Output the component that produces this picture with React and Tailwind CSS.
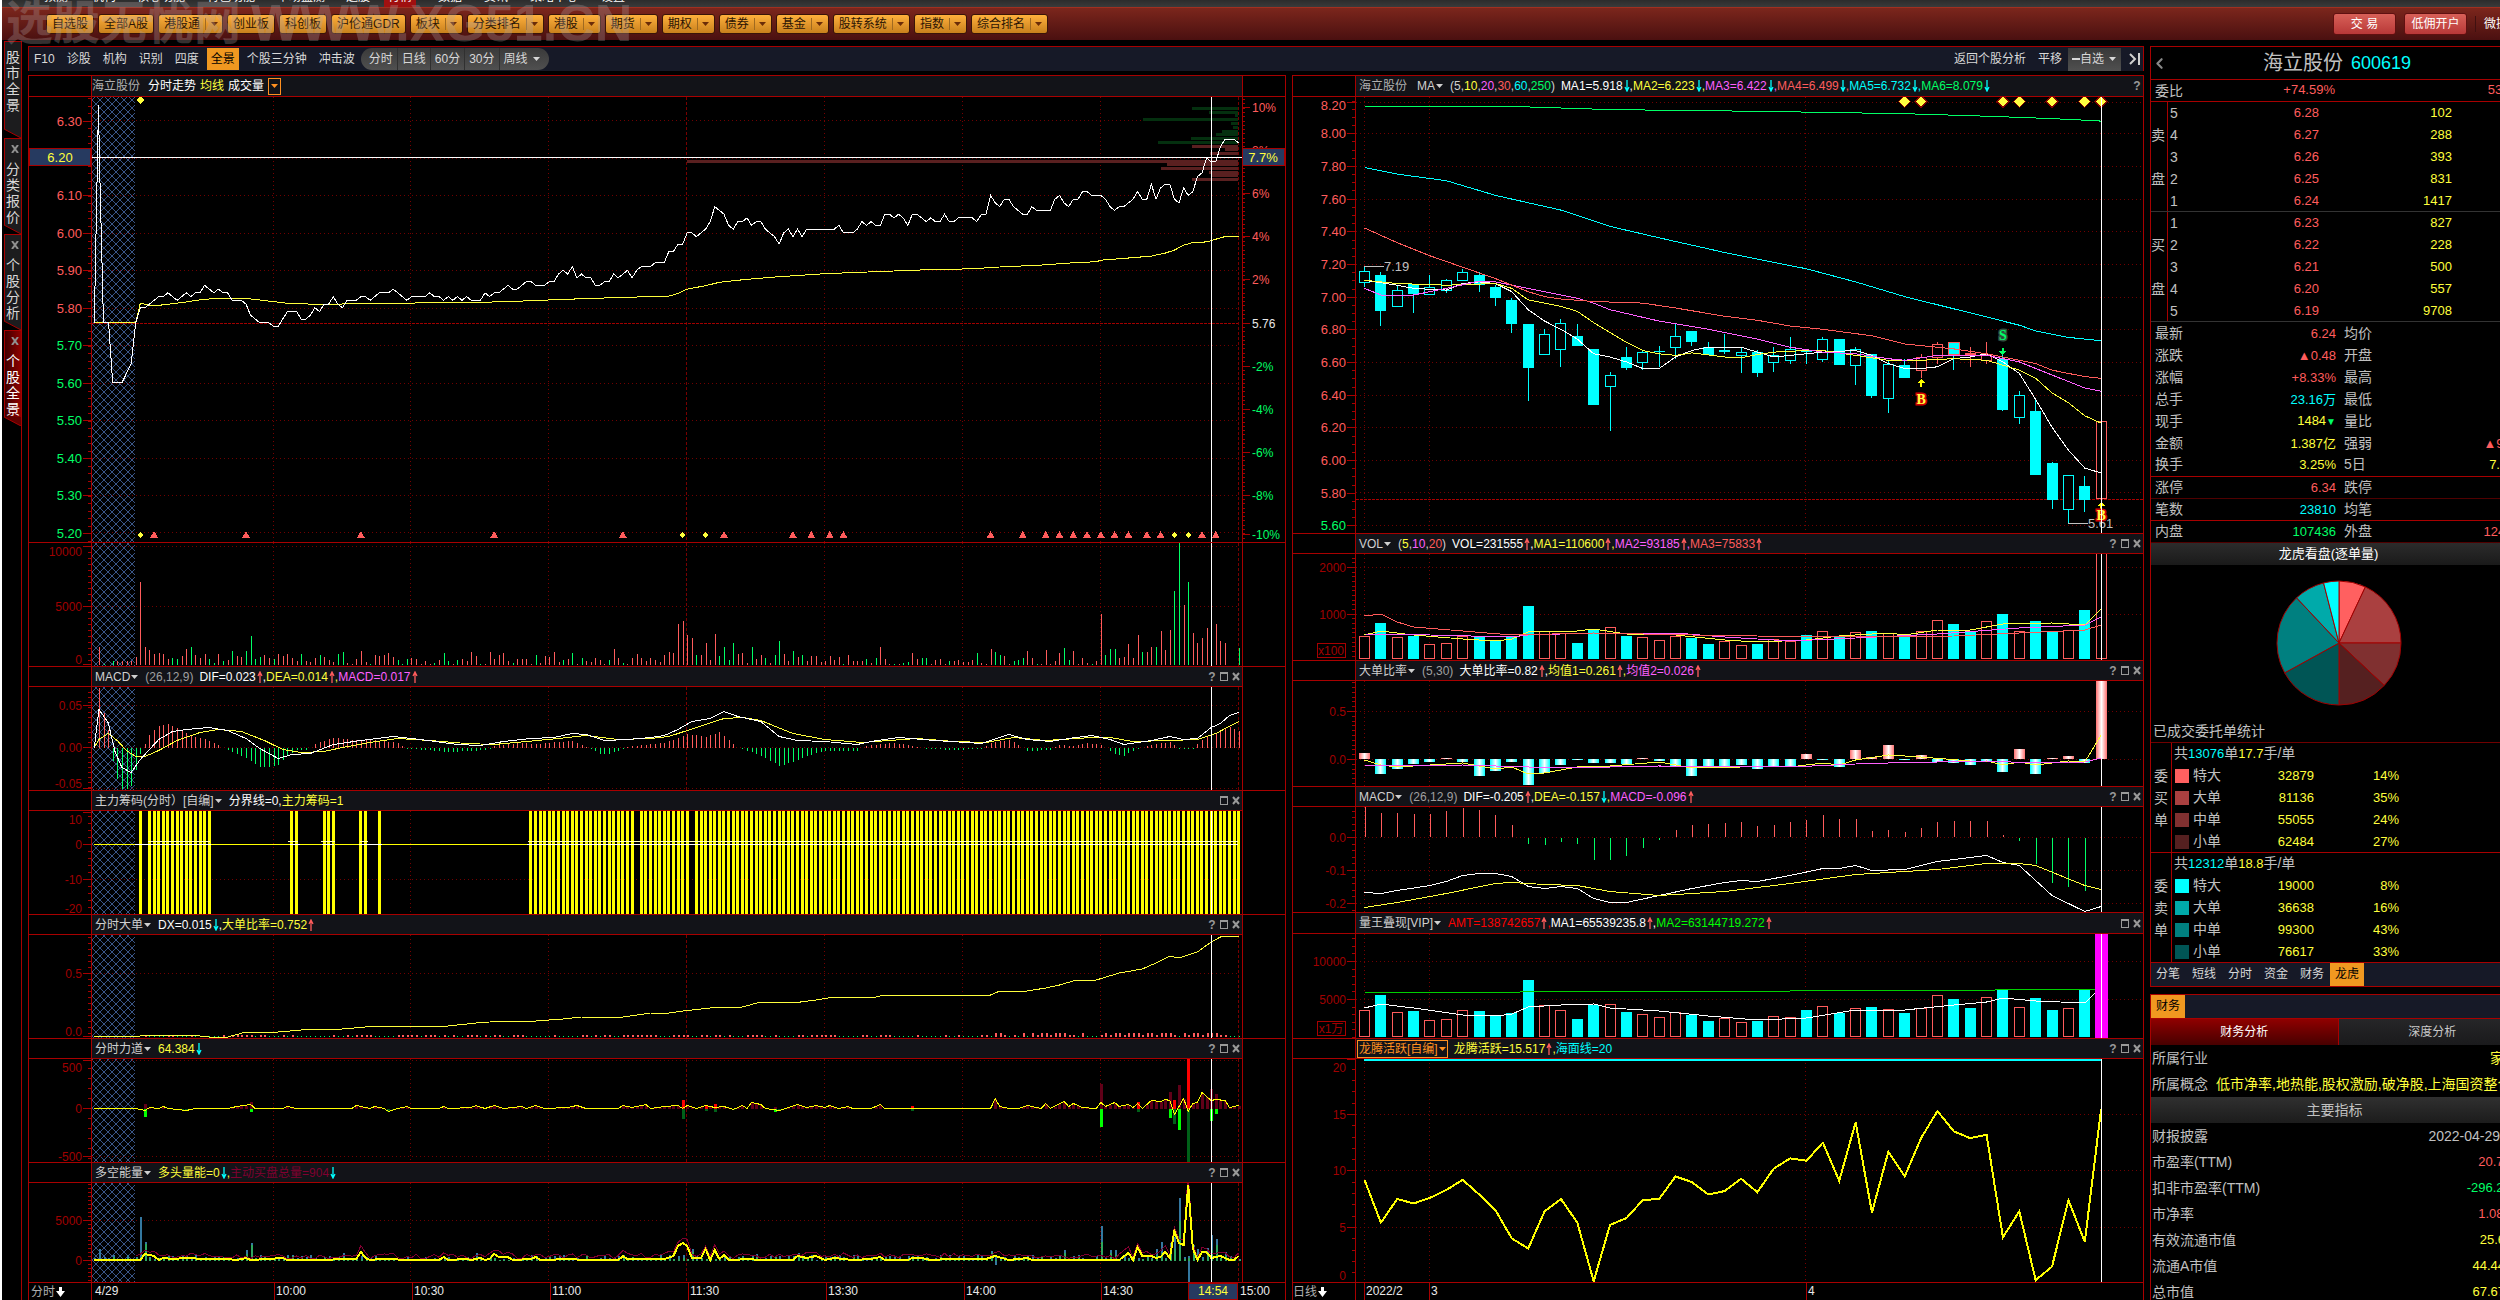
import { ChevronLeft } from "lucide-react";

const RED = "#ff5c5c";
const GREEN = "#00ff66";
const YELLOW = "#ffff3c";
const CYAN = "#00ffff";
const MAGENTA = "#ff60ff";
const LINE = "#a80000";

// minute -> x on the intraday canvas, day index -> x on the daily canvas
const mx = (m) => 135.7 + m * 4.596;
const dx = (i) => 1364.5 + i * 16.37;
const priceY = (p) => 120.5 + (6.3 - p) * 374.6;
const dayY = (p) => 133.3 + (8 - p) * 163.3;

const toPoints = (data, fx, fy) => data.map(([a, b]) => `${fx(a).toFixed(1)},${fy(b).toFixed(1)}`).join(" ");

const interpolate = (data, m) => {
  for (let i = 1; i < data.length; i++) {
    const [a, va] = data[i - 1];
    const [b, vb] = data[i];
    if (m <= b) return va + ((vb - va) * (m - a)) / (b - a);
  }
  return data[data.length - 1][1];
};

const noise = (n) => {
  const v = Math.sin(n * 12.9898) * 43758.5453;
  return v - Math.floor(v);
};

// one price (in cents) per minute, starting at minute 1
const PRICES = [
  580, 580, 581, 582, 583, 583, 584, 583, 582, 583, 584, 583, 584, 584, 586, 585, 584, 585, 584, 584,
  582, 582, 582, 581, 578, 577, 576, 576, 576, 575, 575, 577, 579, 579, 579, 577, 577, 578, 580, 579,
  581, 581, 583, 581, 580, 582, 582, 582, 583, 583, 582, 583, 584, 584, 584, 585, 584, 583, 582, 583,
  583, 583, 583, 584, 583, 583, 582, 583, 582, 583, 582, 583, 582, 582, 582, 584, 583, 584, 584, 585,
  586, 585, 585, 586, 587, 587, 586, 586, 586, 587, 587, 589, 590, 589, 591, 588, 589, 588, 588, 586,
  586, 587, 587, 589, 588, 589, 590, 588, 590, 591, 591, 591, 592, 592, 592, 595, 595, 597, 597, 600,
  600, 599, 600, 601, 603, 607, 606, 605, 602, 601, 603, 603, 604, 602, 603, 603, 601, 600, 599, 597,
  600, 601, 599, 601, 599, 601, 601, 601, 601, 601, 601, 601, 602, 600, 600, 600, 601, 603, 602, 603,
  602, 602, 605, 605, 604, 605, 604, 602, 605, 605, 604, 603, 604, 603, 603, 605, 603, 603, 604, 604,
  604, 604, 603, 605, 605, 610, 608, 607, 609, 609, 607, 606, 605, 605, 607, 606, 606, 606, 606, 609,
  610, 608, 607, 609, 609, 611, 611, 610, 610, 610, 609, 607, 606, 607, 607, 608, 609, 611, 609, 609,
  613, 609, 612, 613, 613, 609, 608, 612, 610, 611, 615, 616, 620, 619, 619, 623, 625, 625, 625, 624,
];

const PRE_OPEN = [
  [-9, 5.76], [-8.1, 6.34], [-7.9, 6.2], [-7, 5.76], [-5.9, 5.76], [-5, 5.6], [-3, 5.6], [-2.2, 5.62], [-1, 5.65], [0, 5.76],
];

const AVERAGE = [
  [-9, 5.76], [0, 5.76], [1, 5.812], [4, 5.805], [10, 5.814], [15, 5.823], [21, 5.826], [24, 5.825], [29, 5.818], [33, 5.812],
  [40, 5.809], [54, 5.812], [70, 5.814], [80, 5.816], [88, 5.82], [99, 5.825], [112, 5.83], [115.5, 5.83], [118, 5.838],
  [120, 5.85], [124, 5.859], [127, 5.868], [133, 5.876], [140, 5.883], [150, 5.891], [162, 5.897], [173, 5.902], [182, 5.904],
  [188, 5.909], [197, 5.914], [204, 5.92], [209, 5.923], [210, 5.927], [215, 5.932], [221, 5.938], [224, 5.946], [226, 5.954],
  [228, 5.967], [230, 5.974], [233, 5.976], [235, 5.983], [237, 5.99], [240, 5.99],
];

// bar heights per minute from 9:30, negative is a falling minute
const VOLUMES = [
  8, 83, 18, 15, 11, 12, 11, 6, -7, -6, 9, 16, -18, 10, 7, 11, -6, -2, 11, -4, 5, -14, 9, 8, -14, -29, -6, -8, 10, 7,
  -6, 11, 9, 11, 7, 4, -11, 4, 3, 7, -10, 8, 5, 3, -11, -13, 2, 1, 6, 14, 3, -1, 10, 9, 10, 12, 8, -5, -1, -6,
  7, 6, 1, 4, 1, -2, 5, -12, -4, 1, -5, 6, 4, 13, 9, -1, 1, 13, 6, 10, 12, 4, -2, 6, 6, 6, 1, -10, 2, 9,
  8, 13, 3, -5, 6, -12, 1, -7, 4, 3, 7, 5, 1, -5, 16, 7, -2, 1, 7, 11, 7, 4, 7, 5, 3, 10, 13, 12, 41, 44,
  30, 27, -10, 10, 22, 5, 31, -9, -18, -5, -22, 11, 12, 2, -18, 6, 10, -7, 2, -10, -24, 11, 4, -14, 8, -10, 4, 9, 9, 3,
  4, 9, 5, 8, -1, 10, 4, 4, 4, -6, 2, -7, 18, 6, 1, -1, 1, -2, -3, 12, 6, -7, -7, 1, 5, 6, 1, -4, 4, 5,
  3, 3, 5, -12, 2, 1, 16, -13, -10, 9, 1, -4, -5, -7, 14, 7, -1, 1, 15, 1, 4, 12, -17, -5, 14, 1, 7, 2, -1, 4,
  51, -10, -16, -16, 7, 8, 21, 7, 30, -13, 13, 18, -18, 34, 15, 35, -74, -122, 60, -83, 32, 22, 27, 37, 48, 41, 24, 22, 0, 0,
  -17,
];

const HIST = [
  [-9, 0], [-8, 60], [-7, 35], [-6, 18], [-5, -13], [-4, -31], [-3, -41], [-2, -41], [-1, -38], [0, -22], [1, -6], [2, 4], [3, 13],
  [5, 22], [7, 24], [8, 22], [10, 17], [12, 12], [15, 9], [17, 5], [19, 0], [21, -4], [23, -8], [25, -13], [27, -19], [29, -19],
  [31, -17], [33, -8], [35, -2], [37, -2], [38, 0], [39, 4], [42, 9], [43, 10], [48, 8], [52, 8], [57, 5], [59, -1], [63, -2],
  [68, -4], [74, -3], [77, -1], [78, 2], [83, 5], [88, 4], [92, 6], [95, 7], [97, 3], [99, -1], [101, -6], [103, -6], [106, -1],
  [108, 2], [115, 5], [118, 10], [120, 14], [124, 11], [127, 16], [129, 8], [131, 0], [134, -4], [137, -10], [140, -18],
  [143, -14], [146, -8], [150, -3], [157, -3], [159, 2], [164, 5], [168, 3], [172, -1], [178, -2], [184, -1], [186, 5],
  [190, 8], [192, 3], [194, -3], [199, -2], [201, 3], [204, 2], [207, 5], [210, 3], [213, -6], [215, -8], [217, -3], [219, 0],
  [221, 3], [225, 6], [227, -1], [230, -1], [232, 8], [234, 13], [236, 17], [238, 21], [240, 17],
];

const DIF = [
  [-9, 0], [-8, 38], [-6, 25], [-4.5, -4], [-3, -20], [-1, -25], [1, -12], [3, -2], [5, 8], [8, 16], [11, 18], [16, 20], [20, 17],
  [24, 9], [27, -1], [31, -11], [34, -7], [38, -6], [43, 3], [49, 7], [56, 11], [62, 8], [70, 3], [75, 2], [80, 6], [86, 9],
  [91, 10], [95, 14], [98, 13], [102, 7], [107, 8], [112, 10], [115, 12], [118, 18], [121, 26], [125, 29], [128, 36], [131, 31],
  [136, 26], [140, 11], [144, 7], [150, 6], [157, 3], [160, 6], [166, 10], [174, 7], [184, 4], [190, 13], [194, 8], [199, 6],
  [203, 9], [208, 12], [212, 8], [215, 3], [221, 7], [225, 11], [228, 8], [231, 9], [234, 20], [236, 24], [238, 32], [240, 35],
];

const DEA = [
  [-9, 0], [-8, 8], [-6, 14], [-4, 7], [-2, -3], [0, -9], [2, -9], [5, -3], [9, 7], [14, 15], [18, 18], [23, 16], [28, 7], [32, -2],
  [36, -5], [41, -4], [45, 0], [51, 5], [57, 9], [64, 7], [72, 4], [78, 3], [85, 6], [92, 9], [98, 12], [105, 8], [112, 9],
  [116, 11], [122, 20], [128, 29], [132, 30], [136, 27], [143, 14], [150, 8], [158, 5], [164, 7], [170, 9], [178, 6], [185, 5],
  [191, 10], [198, 7], [208, 10], [212, 10], [217, 6], [225, 7], [231, 8], [235, 14], [240, 26],
];

const BIG_ORDER = [
  [-9, 1036], [1, 1036], [6, 1035], [12, 1035], [16, 1037], [20, 1037], [24, 1032], [31, 1032], [36, 1030], [45, 1029], [50, 1027],
  [56, 1026], [68, 1026], [74, 1023], [80, 1021], [87, 1021], [93, 1019], [97, 1017], [106, 1017], [109, 1015], [112, 1013],
  [116, 1013], [119, 1011], [125, 1008], [132, 1007], [136, 1002], [143, 1003], [148, 1000], [152, 997], [161, 997], [163, 995],
  [186, 995], [188, 991], [194, 991], [198, 988], [201, 985], [204, 981], [209, 980], [214, 973], [219, 969], [222, 963],
  [225, 956], [227, 958], [229, 955], [231, 952], [234, 942], [236, 937], [237, 936], [240, 936],
];

const FORCE = [
  [-9, 0], [0, 0], [2, -2], [3, 1], [5, 0], [6, 2], [7, 0], [11, -2], [13, 0], [20, 0], [22, 2], [25, 4], [26, 0], [32, 0], [33, 2],
  [35, 0], [47, 0], [48, 3], [51, 0], [52, 2], [54, 0], [55, -3], [57, 0], [59, 2], [60, 0], [66, 0], [67, 2], [68, 0], [73, 1],
  [74, 3], [76, 0], [78, 3], [80, 0], [84, 2], [85, 0], [87, 3], [89, 0], [94, 1], [96, 3], [98, 0], [105, 0], [106, 3], [108, 1],
  [111, 4], [112, 0], [115, 2], [118, 3], [119, 0], [120, 3], [122, 0], [124, 3], [126, 1], [128, 2], [130, -1], [132, 3], [133, 0],
  [134, 6], [136, 4], [137, 0], [140, -2], [142, 1], [144, 4], [146, 1], [148, 3], [150, 1], [151, 3], [153, 0], [155, 2], [156, 0],
  [160, 0], [162, 4], [163, 0], [186, 0], [187, 10], [188, 2], [190, 0], [192, 0], [194, 3], [197, 0], [198, 5], [199, 0], [202, 7],
  [203, 2], [204, 5], [206, 1], [209, 0], [210, 6], [211, 2], [213, 6], [214, 2], [216, 4], [217, 1], [218, 5], [219, 0], [221, 8],
  [223, 7], [224, 9], [225, 8], [226, -6], [227, 2], [228, 10], [229, -3], [230, 5], [231, 6], [232, 16], [234, 8], [235, 9],
  [237, 8], [238, 1], [240, 3],
];

// minute, height up, colour, height down, colour
const FORCE_BARS = [
  [2, 5, "#600018", 8, "#00ff00"], [25, 7, "#600018", 3, "#00ff00"], [119, 9, "#ff0000", 10, "#006018"],
  [124, 4, "#ff0000", 2, "#006018"], [126, 5, "#ff0000", 3, "#006018"], [139, 2, "#600018", 3, "#00ff00"],
  [169, 3, "#ff0000", 2, "#006018"], [210, 25, "#600018", 18, "#00ff00"], [218, 7, "#ff0000", 3, "#006018"],
  [225, 17, "#600018", 9, "#00ff00"], [226, 9, "#ff0000", 15, "#006018"], [227, 24, "#600018", 21, "#00ff00"],
  [229, 50, "#ff0000", 53, "#006018"], [234, 20, "#600018", 12, "#00ff00"], [235, 15, "#600018", 5, "#00ff00"],
];

const ENERGY = [
  [-9, 0], [1, 0], [2, 6], [4, 4], [5, 0], [6, 2], [8, 1], [11, 2], [15, 1], [20, 1], [22, 0], [24, 2], [25, 0], [32, 2], [33, 0],
  [42, 0], [44, 1], [47, 1], [48, 1], [49, 8], [50, 2], [51, 0], [53, 1], [56, 1], [58, 0], [66, 0], [67, 3], [68, 0], [72, 1],
  [73, 0], [75, 2], [76, 0], [77, 1], [78, 6], [79, 3], [81, 3], [82, 0], [86, 1], [87, 3], [88, 0], [95, 1], [97, 0], [105, 0],
  [106, 4], [107, 1], [115, 1], [117, 4], [118, 14], [119, 17], [120, 14], [121, 2], [123, 2], [124, 11], [125, 0], [126, 10],
  [127, 1], [128, 5], [129, 0], [134, 1], [135, 0], [143, 0], [144, 4], [146, 2], [148, 4], [150, 0], [152, 2], [156, 0],
  [160, 1], [162, 3], [163, 0], [168, 0], [169, 2], [171, 2], [173, 0], [177, 1], [185, 1], [187, 4], [190, 0], [194, 2],
  [195, 0], [214, 0], [216, 7], [217, 0], [218, 13], [219, 4], [221, 4], [222, 2], [223, 3], [224, 8], [225, 2], [226, 29],
  [227, 17], [228, 15], [229, 75], [230, 12], [231, 0], [232, 8], [233, 8], [234, 2], [236, 4], [238, 0], [239, 0], [240, 4],
];

const ENERGY_SPIKES = {
  "-8": 12, 1: 44, 2: 19, 24: 11, 25: 18, 45: 8, 74: 8, 121: 12, 135: 7, 144: 8, 156: 6, 186: 10, 195: 6, 202: 11, 210: 35,
  212: 11, 213: 11, 222: 12, 223: 19, 225: 18, 226: 24, 227: 63, 230: 16, 231: 12, 233: 13, 234: 26, 235: 22, 237: 9,
};

const CHIP_MINUTES = [];
[[1, 1], [3, 16], [34, 35], [41, 43], [49, 50], [53, 53], [86, 108], [110, 120], [122, 240]].forEach(([a, b]) => {
  for (let m = a; m <= b; m++) CHIP_MINUTES.push(m);
});

const DEPTH_BARS = [
  [1192, 107, 0], [1209, 111, 0], [1235, 114, 0], [1143, 118, 0], [1231, 122, 0], [1233, 126, 0], [1222, 130, 0], [1216, 133, 0],
  [1191, 137, 0], [1158, 141, 0], [1192, 145, 1], [1225, 148, 1], [1210, 152, 1], [687, 160, 1], [1167, 163, 1], [1161, 167, 1],
  [1209, 171, 1], [1212, 174, 1], [1192, 178, 1],
];

const TRIANGLES = [4, 24, 49, 78, 106, 128, 143, 147, 151, 154, 186, 193, 198, 201, 204, 207, 210, 213, 216, 220, 223, 232, 235];
const SMALL_DIAMONDS = [1, 119, 124, 226, 229];

// high, body top, body bottom, low, kind (f filled, h hollow, r red hollow)
const CANDLES = [
  [7.18, 7.155, 7.085, 7.06, "h"], [7.15, 7.13, 6.91, 6.82, "f"], [7.07, 7.04, 6.94, 6.94, "h"], [7.08, 7.08, 7.02, 6.9, "f"],
  [7.13, 7.06, 7.02, 7.02, "h"], [7.11, 7.1, 7.04, 7.02, "h"], [7.17, 7.15, 7.1, 7.1, "h"], [7.15, 7.13, 7.07, 7.03, "f"],
  [7.07, 7.06, 6.99, 6.94, "f"], [6.99, 6.98, 6.83, 6.78, "f"], [6.83, 6.83, 6.56, 6.36, "f"], [6.8, 6.77, 6.65, 6.64, "h"],
  [6.86, 6.84, 6.68, 6.57, "h"], [6.83, 6.76, 6.7, 6.7, "f"], [6.68, 6.68, 6.34, 6.34, "f"], [6.54, 6.52, 6.45, 6.18, "h"],
  [6.69, 6.63, 6.56, 6.55, "f"], [6.67, 6.66, 6.6, 6.55, "h"], [6.7, 6.665, 6.66, 6.57, "f"], [6.83, 6.76, 6.69, 6.62, "h"],
  [6.79, 6.79, 6.72, 6.7, "f"], [6.72, 6.69, 6.64, 6.64, "f"], [6.77, 6.67, 6.66, 6.65, "f"], [6.69, 6.66, 6.64, 6.53, "h"],
  [6.67, 6.66, 6.53, 6.51, "f"], [6.69, 6.64, 6.6, 6.54, "h"], [6.75, 6.68, 6.61, 6.59, "h"], [6.67, 6.665, 6.66, 6.59, "f"],
  [6.75, 6.74, 6.62, 6.6, "h"], [6.74, 6.74, 6.58, 6.58, "f"], [6.69, 6.68, 6.58, 6.46, "h"], [6.65, 6.65, 6.39, 6.38, "f"],
  [6.61, 6.59, 6.38, 6.29, "h"], [6.62, 6.58, 6.5, 6.5, "f"], [6.65, 6.63, 6.55, 6.5, "r"], [6.72, 6.71, 6.63, 6.59, "r"],
  [6.72, 6.72, 6.645, 6.55, "f"], [6.69, 6.655, 6.65, 6.57, "r"], [6.72, 6.64, 6.61, 6.59, "r"], [6.64, 6.62, 6.31, 6.3, "f"],
  [6.42, 6.4, 6.265, 6.22, "h"], [6.37, 6.3, 5.91, 5.91, "f"], [5.99, 5.98, 5.755, 5.7, "f"], [5.91, 5.91, 5.7, 5.61, "h"],
  [5.9, 5.84, 5.755, 5.68, "f"], [6.26, 6.24, 5.77, 5.75, "r"],
];

const MA_LINES = [
  ["#ffffff", [[0, 7.1], [2, 7.07], [3, 7.05], [5, 7.04], [6, 7.08], [7, 7.09], [8, 7.08], [9, 7.03], [10, 6.92], [11, 6.85], [12, 6.8], [13, 6.74], [14, 6.65], [15, 6.63], [16, 6.6], [17, 6.56], [18, 6.56], [19, 6.63], [20, 6.67], [21, 6.69], [23, 6.69], [24, 6.66], [25, 6.63], [26, 6.64], [28, 6.66], [30, 6.67], [31, 6.64], [32, 6.59], [33, 6.56], [34, 6.56], [35, 6.57], [36, 6.62], [37, 6.63], [38, 6.65], [39, 6.6], [40, 6.53], [41, 6.37], [42, 6.2], [43, 6.06], [44, 5.95], [45, 5.92]]],
  [YELLOW, [[0, 7.1], [2, 7.08], [5, 7.07], [8, 7.08], [9, 7.05], [10, 6.98], [11, 6.96], [12, 6.94], [13, 6.91], [14, 6.84], [15, 6.78], [16, 6.72], [17, 6.67], [18, 6.65], [19, 6.64], [20, 6.655], [22, 6.63], [23, 6.625], [24, 6.645], [25, 6.66], [27, 6.67], [28, 6.67], [30, 6.64], [32, 6.61], [34, 6.61], [36, 6.62], [38, 6.61], [40, 6.55], [41, 6.5], [42, 6.41], [43, 6.35], [44, 6.27], [45, 6.225]]],
  [MAGENTA, [[0, 7.05], [1, 7.01], [3, 7.01], [5, 7.05], [7, 7.095], [8, 7.09], [10, 7.05], [12, 7.01], [13, 6.99], [14, 6.96], [15, 6.92], [18, 6.85], [21, 6.8], [24, 6.74], [26, 6.69], [28, 6.66], [30, 6.65], [32, 6.62], [33, 6.61], [35, 6.64], [38, 6.64], [39, 6.62], [40, 6.6], [41, 6.56], [42, 6.52], [43, 6.48], [44, 6.44], [45, 6.42]]],
  [RED, [[0, 7.42], [2, 7.33], [4, 7.25], [6, 7.18], [8, 7.11], [10, 7.03], [11, 7.0], [12, 6.985], [14, 6.97], [17, 6.96], [19, 6.93], [22, 6.88], [24, 6.855], [26, 6.82], [28, 6.8], [31, 6.76], [33, 6.71], [36, 6.68], [38, 6.65], [40, 6.61], [41, 6.59], [42, 6.55], [43, 6.53], [44, 6.51], [45, 6.5]]],
  [CYAN, [[0, 7.79], [2, 7.75], [5, 7.71], [8, 7.62], [12, 7.53], [15, 7.43], [18, 7.36], [22, 7.27], [25, 7.21], [27, 7.17], [30, 7.09], [33, 7.0], [37, 6.9], [40, 6.825], [41, 6.79], [43, 6.75], [45, 6.73]]],
  [GREEN, [[0, 8.165], [9, 8.165], [15, 8.145], [24, 8.135], [30, 8.125], [33, 8.12], [38, 8.105], [42, 8.09], [44, 8.08], [45, 8.075]]],
];

// negative is a falling day (filled cyan)
const DAY_VOLUMES = [
  23, -36, 22, -23, 15, 16, 23, -22, -19, -22, -53, 28, 26, -16, -30, 32, -23, 22, 19, 23, -21, -15, 18, 14, -15, 20, 18, -24,
  28, -23, 27, -28, 26, -23, 28, 39, -35, -28, 38, -45, 28, -38, -27, 29, -49, 106,
];
const DAY_AMOUNTS = [
  27, -42, 25, -26, 17, 18, 27, -26, -21, -24, -57, 32, 27, -18, -32, 33, -25, 23, 20, 25, -22, -16, 19, 15, -16, 21, 20, -27,
  31, -24, 29, -30, 28, -24, 29, 42, -38, -29, 40, -48, 30, -39, -27, 29, -47,
];
const VOL_MA = [
  [YELLOW, [[0, 24], [1, 28], [3, 24], [6, 20], [8, 18], [9, 20], [10, 27], [13, 28], [14, 30], [16, 25], [19, 24], [22, 19], [24, 17], [27, 19], [29, 23], [32, 26], [33, 24], [35, 29], [37, 29], [39, 35], [42, 36], [44, 34], [45, 50]]],
  [MAGENTA, [[0, 25], [4, 24], [9, 22], [10, 24], [14, 26], [19, 26], [22, 22], [26, 18], [30, 21], [35, 25], [40, 31], [44, 34], [45, 42]]],
  [RED, [[0, 43], [1, 45], [2, 37], [3, 32], [6, 28], [9, 24], [14, 26], [20, 24], [28, 22], [36, 23], [40, 26], [44, 29], [45, 34]]],
];
const RATIOS = [
  6, -15, -10, -5, -3, 1, -3, -17, -12, -3, -26, -14, -6, -1, -4, -4, -5, 1, -2, -8, -17, -7, -8, -6, -10, -7, -8, 5, -1, -8, 9,
  2, 14, -1, 4, -3, -4, -6, -3, -13, 10, -15, 1, 3, -4, 79,
];
const RATIO_MA = [
  [YELLOW, [[0, -1], [1, -6], [2, -8], [5, -5], [6, -4], [8, -10], [9, -8], [10, -15], [11, -14], [13, -8], [15, -7], [18, -3], [20, -9], [23, -8], [26, -8], [28, -4], [29, -6], [30, -1], [32, 4], [34, 2], [37, -2], [38, -2], [39, -6], [40, -3], [41, -6], [43, -2], [44, -3], [45, 24]]],
  [MAGENTA, [[0, -6], [2, -7], [6, -6], [12, -9], [18, -7], [26, -8], [30, -5], [32, -4], [38, -2], [41, -4], [44, -3], [45, 1]]],
];
const DAY_HIST = [
  32, 24, 24, 23, 23, 26, 29, 27, 22, 12, -6, -7, -4, -6, -22, -22, -18, -10, -2, 7, 12, 13, 14, 15, 11, 12, 15, 17, 22, 18, 18,
  6, 7, 5, 9, 15, 16, 16, 16, 2, -3, -26, -45, -49, -53, -32,
];
const DAY_DIF = [[0, -55], [1, -56], [2, -53], [4, -48], [5, -44], [6, -38], [7, -36], [8, -36], [9, -39], [10, -49], [11, -51], [12, -49], [13, -51], [14, -61], [15, -65], [16, -65], [18, -58], [20, -51], [22, -45], [23, -43], [24, -44], [26, -38], [28, -31], [29, -31], [30, -28], [31, -33], [33, -32], [35, -24], [38, -18], [39, -25], [40, -28], [42, -58], [44, -74], [45, -69]];
const DAY_DEA = [[0, -70], [2, -65], [5, -56], [8, -46], [9, -45], [11, -47], [13, -48], [15, -54], [18, -58], [22, -54], [26, -46], [30, -37], [35, -32], [38, -26], [40, -26], [41, -28], [44, -48], [45, -52]];
const AMOUNT_MA = [[0, 29], [1, 33], [3, 29], [6, 22], [8, 21], [9, 23], [10, 30], [12, 32], [14, 33], [15, 29], [18, 26], [21, 21], [24, 17], [27, 19], [30, 27], [33, 27], [36, 32], [38, 35], [39, 39], [41, 36], [44, 34], [45, 50]];
const ACTIVE = [
  9.2, 5.4, 7.5, 7.1, 7.6, 8.3, 9.2, 7.9, 6.5, 4, 3.1, 6.4, 7.5, 5.4, 0.2, 5.2, 5.8, 7.4, 7.5, 9.5, 9, 7.9, 8.2, 9.3, 8.1, 10.2,
  11.1, 10.9, 12.5, 9.1, 14.3, 6.3, 11.7, 9.5, 12.9, 15.3, 13.5, 12.9, 13.2, 4.1, 6.4, 0.3, 1.5, 7.4, 3.7, 15.5,
];

const Poly = ({ data, fx, fy, color, width = 1 }) => (
  <polyline points={toPoints(data, fx, fy)} fill="none" stroke={color} strokeWidth={width} />
);

const Diamond = ({ x, y, r = 6 }) => (
  <path d={`M${x} ${y - r}L${x + r} ${y}L${x} ${y + r}L${x - r} ${y}Z`} fill="#ffff40" stroke="#800000" strokeWidth="1" />
);

const Caret = () => (
  <svg width="7" height="4" viewBox="0 0 7 4" className="mx-px shrink-0" aria-hidden="true">
    <path d="M0 0h7L3.5 4z" fill="currentColor" />
  </svg>
);

const Arrow = ({ down }) => (
  <svg width="6" height="12" viewBox="0 0 6 12" className="ml-px shrink-0" aria-hidden="true">
    {down ? (
      <path d="M3 0v11M1 7l2 4l2-4" fill="none" stroke={CYAN} strokeWidth="1.3" />
    ) : (
      <path d="M3 12v-11M1 5l2-4l2 4" fill="none" stroke={RED} strokeWidth="1.3" />
    )}
  </svg>
);

const Readout = ({ text, color, dir, last }) => (
  <span className={`flex items-center ${color}`}>
    {text}
    {dir && <Arrow down={dir === "down"} />}
    {!last && ","}
  </span>
);

const WindowButtons = ({ help = true, frame = true }) => (
  <span className="ml-auto flex items-center gap-1 pr-0.5 text-[#999]">
    {help && <button type="button" aria-label="帮助" className="w-2 text-xs leading-3 font-bold">?</button>}
    {frame && (
      <>
        <button type="button" aria-label="最大化" className="w-2">
          <svg width="8" height="9" viewBox="0 0 8 9" shapeRendering="crispEdges">
            <path d="M0 0h8v9H0z M1 2h6v6H1z" fill="currentColor" fillRule="evenodd" />
          </svg>
        </button>
        <button type="button" aria-label="关闭" className="w-2">
          <svg width="8" height="9" viewBox="0 0 8 9">
            <path d="M1 1l6 7M7 1l-6 7" stroke="currentColor" strokeWidth="2" />
          </svg>
        </button>
      </>
    )}
  </span>
);

const PanelHeader = ({ tall, right, children, ...buttons }) => (
  <div className={`flex ${tall ? "h-[21px]" : "h-5"}`}>
    <div className="w-[63px] shrink-0 border-r border-b border-[#a80000]" />
    <div className="flex min-w-0 flex-1 items-center gap-1.5 overflow-hidden border-b border-[#a80000] bg-[#121318] pl-[3px] text-xs whitespace-nowrap text-[#d0d0d0]">
      {children}
      <WindowButtons {...buttons} />
    </div>
    {right && <div className="w-[43px] shrink-0 border-l border-[#a80000]" />}
  </div>
);

const Axis = ({ top, height, labels, step, from, color = "#a00000", size = 12, box, unit }) => {
  const ticks = [];
  for (let y = from; y > top; y -= step) ticks.push(y);
  for (let y = from + step; y < top + height; y += step) ticks.push(y);
  return (
    <svg width="63" height={height} viewBox={`0 ${top} 63 ${height}`} className="shrink-0 overflow-hidden" fontSize={size}>
      <g shapeRendering="crispEdges" stroke={LINE}>
        <path d={`M62.5 ${top}v${height}`} />
        {ticks.map((y) => <path key={y} d={`M59 ${Math.round(y) + 0.5}h3`} />)}
        {labels.map(([, , , tick], i) => <path key={i} d={`M54 ${Math.round(tick ?? labels[i][1]) + 0.5}h8`} />)}
      </g>
      {labels.map(([t, y, c]) => (
        <text key={t} x="53" y={y + 5} textAnchor="end" fill={c || color}>{t}</text>
      ))}
      {box && (
        <g>
          <rect x="0.5" y="148.5" width="61" height="17" fill="#263a60" stroke={LINE} />
          <text x="31" y="162" textAnchor="middle" fill={YELLOW}>{box}</text>
        </g>
      )}
      {unit && (
        <g>
          <rect x="24.5" y={top + height - 16.5} width="28" height="14" fill="none" stroke={LINE} />
          <text x="38" y={top + height - 5} textAnchor="middle" fill={color}>{unit}</text>
        </g>
      )}
    </svg>
  );
};

const PERCENTS = [
  ["10%", 107, RED], ["8%", 150, RED], ["6%", 193, RED], ["4%", 236, RED], ["2%", 279, RED], ["5.76", 323, "#e8e8e8"],
  ["-2%", 366, GREEN], ["-4%", 409, GREEN], ["-6%", 452, GREEN], ["-8%", 495, GREEN], ["-10%", 534, GREEN],
];

const PercentAxis = () => (
  <svg width="43" height="445" viewBox="0 97 43 445" className="shrink-0" fontSize="12">
    <g shapeRendering="crispEdges" stroke={LINE}>
      <path d="M0.5 97v445" />
      {Array.from({ length: 103 }, (_, i) => <path key={i} d={`M1 ${99.5 + Math.round(i * 4.3)}h2`} />)}
      {PERCENTS.map(([t, y]) => <path key={t} d={`M1 ${y + 0.5}h7`} />)}
    </g>
    {PERCENTS.map(([t, y, c]) => (
      <text key={t} x="10" y={y + 5} fill={c}>{t}</text>
    ))}
    <rect x="0.5" y="148.5" width="42" height="17" fill="#263a60" stroke={LINE} />
    <text x="21" y="162" textAnchor="middle" fill={YELLOW} fontSize="13">7.7%</text>
  </svg>
);

const GRID_MINUTES = [30, 60, 90, 120, 150, 180, 210, 240];
const GRID_DAYS = [0, 4, 27];

const IntradayPlot = ({ top, height, rows = [], children }) => (
  <svg
    viewBox={`92 ${top} 1150 ${height}`}
    height={height}
    preserveAspectRatio="none"
    shapeRendering="crispEdges"
    className="min-w-0 flex-1"
  >
    <defs>
      <pattern id={`hatch${top}`} width="8" height="8" patternUnits="userSpaceOnUse">
        <path d="M0 0L8 8M8 0L0 8" stroke="#3a5688" strokeWidth="1" />
      </pattern>
    </defs>
    <rect x="92" y={top} width="43" height={height} fill={`url(#hatch${top})`} />
    {rows.map((y) => <path key={y} d={`M92 ${y + 0.5}H1238`} stroke="#700000" strokeDasharray="1 3" />)}
    {GRID_MINUTES.map((m) => (
      <path
        key={m}
        d={`M${Math.round(mx(m)) - 0.5} ${top}v${height}`}
        stroke="#780000"
        strokeDasharray={m % 120 === 0 ? "3 2" : "1 3"}
      />
    ))}
    {children}
    <path d={`M1211.5 ${top}v${height}`} stroke="#fff" />
  </svg>
);

const DailyPlot = ({ top, height, rows = [], children }) => (
  <svg
    viewBox={`1356 ${top} 787 ${height}`}
    height={height}
    preserveAspectRatio="none"
    shapeRendering="crispEdges"
    className="min-w-0 flex-1"
  >
    {rows.map((y) => <path key={y} d={`M1356 ${y + 0.5}H2143`} stroke="#700000" strokeDasharray="1 3" />)}
    {GRID_DAYS.map((i) => <path key={i} d={`M${Math.round(dx(i)) - 0.5} ${top}v${height}`} stroke="#780000" strokeDasharray="1 3" />)}
    {children}
    <path d={`M2101.5 ${top}v${height}`} stroke="#fff" />
  </svg>
);

const PlotRow = ({ right, children }) => (
  <div className="flex border-b border-[#a80000]">
    {children}
    {right && <div className="w-[43px] shrink-0 border-l border-[#a80000]" />}
  </div>
);

const DayBars = ({ data, base }) => (
  <g>
    {data.map((v, i) => {
      const x = Math.round(dx(i) - 5.5);
      return v < 0 ? (
        <rect key={i} x={x} y={base + v} width="11" height={-v} fill={CYAN} />
      ) : (
        <rect key={i} x={x + 0.5} y={base - v + 0.5} width="10" height={v - 1} fill="#000" stroke={RED} />
      );
    })}
  </g>
);

const IntradayColumn = () => {
  const zero = 747.5;
  const line = [...PRE_OPEN, ...PRICES.map((p, i) => [i + 1, p / 100])];
  const minutes = Array.from({ length: 250 }, (_, i) => i - 9);
  return (
    <section className="flex min-w-0 flex-col border-x border-t border-[#a80000]">
      <div className="flex h-[21px]">
        <div className="w-[63px] shrink-0 border-r border-b border-[#a80000]" />
        <div className="flex min-w-0 flex-1 items-center gap-1 border-b border-[#a80000] bg-[#121318] text-xs whitespace-nowrap">
          <span className="pr-1 text-[#b0b0b0]">海立股份</span>
          <span className="text-white">分时走势</span>
          <span className="text-[#ffff3c]">均线</span>
          <span className="text-white">成交量</span>
          <button type="button" aria-label="更多指标" className="flex h-[17px] w-[13px] items-center justify-center border border-[#ff9020] text-[#ff9020]">
            <Caret />
          </button>
        </div>
        <div className="w-[43px] shrink-0 border-b border-l border-[#a80000]" />
      </div>

      <PlotRow>
        <Axis
          top={97}
          height={445}
          from={120.5}
          step={7.5}
          size={13}
          box="6.20"
          labels={["6.30", "6.20", "6.10", "6.00", "5.90", "5.80", "5.70", "5.60", "5.50", "5.40", "5.30", "5.20"].map((t) => [
            t,
            Math.round(priceY(Number(t))),
            Number(t) > 5.76 ? RED : GREEN,
          ])}
        />
        <IntradayPlot top={97} height={445} rows={[120, 158, 195, 233, 270, 308, 345, 383, 420, 458, 495, 532]}>
          {DEPTH_BARS.map(([x, y, up]) => (
            <rect key={y} x={x} y={y} width={1238 - x} height="3" fill={up ? "#5a2020" : "#04300f"} />
          ))}
          <path d="M92 323.5H1238" stroke="#a00000" strokeDasharray="3 1" />
          <path d="M92 157.5H1242" stroke="#fff" />
          <Poly data={AVERAGE} fx={mx} fy={priceY} color={YELLOW} />
          <Poly data={line} fx={mx} fy={priceY} color="#fff" />
          {TRIANGLES.map((m) => <path key={m} d={`M${mx(m)} 531l4 7h-8z`} fill={RED} />)}
          {SMALL_DIAMONDS.map((m) => <path key={m} d={`M${mx(m)} 532l3 3l-3 3l-3 -3z`} fill={YELLOW} />)}
          <path d={`M${mx(1)} 96l4 4l-4 4l-4 -4z`} fill={YELLOW} />
        </IntradayPlot>
        <PercentAxis />
      </PlotRow>

      <PlotRow right>
        <Axis top={543} height={123} from={606} step={6} labels={[["10000", 551, null, 546], ["5000", 606], ["0", 659, null, 664]]} />
        <IntradayPlot top={543} height={123} rows={[546, 606]}>
          {VOLUMES.map((v, m) => (
            <rect
              key={m}
              x={Math.round(mx(m))}
              y={665 - Math.abs(v)}
              width="1"
              height={Math.abs(v)}
              fill={m === 234 ? "#ff00a0" : v < 0 ? GREEN : RED}
            />
          ))}
          {[[-8, 18], [-7, -1], [-5, -4], [-4, 4], [-3, 4], [-2, 4], [-1, 4]].map(([m, v]) => (
            <rect key={m} x={Math.round(mx(m))} y={665 - Math.abs(v)} width="1" height={Math.abs(v)} fill={v < 0 ? GREEN : RED} />
          ))}
        </IntradayPlot>
      </PlotRow>

      <PanelHeader right>
        <button type="button" className="flex items-center">MACD<Caret /></button>
        <span className="text-[#a0a0a0]">(26,12,9)</span>
        <span className="flex">
          <Readout text="DIF=0.023" color="text-white" dir="up" />
          <Readout text="DEA=0.014" color="text-[#ffff3c]" dir="up" />
          <Readout text="MACD=0.017" color="text-[#ff60ff]" dir="up" last />
        </span>
      </PanelHeader>
      <PlotRow right>
        <Axis top={687} height={103} from={747} step={5} labels={[["0.05", 705], ["0.00", 747], ["-0.05", 783, null, 788]]} />
        <IntradayPlot top={687} height={103} rows={[705, 747, 788]}>
          {minutes.map((m) => {
            const v = Math.round(interpolate(HIST, m));
            return (
              <rect key={m} x={Math.round(mx(m))} y={v > 0 ? zero - v : zero} width="1" height={Math.abs(v)} fill={v > 0 ? RED : GREEN} />
            );
          })}
          <Poly data={DEA} fx={mx} fy={(v) => zero - v} color={YELLOW} />
          <Poly data={DIF} fx={mx} fy={(v) => zero - v} color="#fff" />
        </IntradayPlot>
      </PlotRow>

      <PanelHeader right help={false}>
        <button type="button" className="flex items-center">主力筹码(分时）[自编]<Caret /></button>
        <span className="flex">
          <Readout text="分界线=0" color="text-white" />
          <Readout text="主力筹码=1" color="text-[#ffff3c]" last />
        </span>
      </PanelHeader>
      <PlotRow right>
        <Axis top={811} height={103} from={844} step={7} labels={[["10", 819, null, 812], ["0", 844], ["-10", 879], ["-20", 908, null, 914]]} />
        <IntradayPlot top={811} height={103} rows={[879]}>
          <path d="M94 844.5H1238" stroke="#fff" />
          {CHIP_MINUTES.map((m) => <rect key={m} x={Math.round(mx(m) - 1.5)} y="811" width="3" height="103" fill="#ffff00" />)}
          <path d="M94 844.5H135M211 844.5H290M300 844.5H322M334 844.5H359M382 844.5H527" stroke="#ffff00" />
          <path d="M135 844.5H211M290 844.5H300M322 844.5H334M359 844.5H382M527 844.5H1238" stroke="#fff" />
          <path d="M148 841.5H210M288 841.5H298M321 841.5H335M360 841.5H368M528 841.5H1238" stroke="#ffffc0" />
        </IntradayPlot>
      </PlotRow>

      <PanelHeader right>
        <button type="button" className="flex items-center">分时大单<Caret /></button>
        <span className="flex">
          <Readout text="DX=0.015" color="text-white" dir="down" />
          <Readout text="大单比率=0.752" color="text-[#ffff3c]" dir="up" last />
        </span>
      </PanelHeader>
      <PlotRow right>
        <Axis top={935} height={103} from={973} step={6} labels={[["0.5", 973], ["0.0", 1031, null, 1036]]} />
        <IntradayPlot top={935} height={103} rows={[973]}>
          {minutes.filter((m) => m > 1).map((m) => {
            const rise = interpolate(BIG_ORDER, m - 1) - interpolate(BIG_ORDER, m);
            const up = noise(m) < 0.35 || rise > 0.6;
            const h = up ? (m > 185 && noise(m + 7) > 0.4 ? 4 : 2) : 1;
            return <rect key={m} x={Math.round(mx(m))} y={1037 - h} width={up ? 2 : 1} height={h} fill={up ? RED : GREEN} />;
          })}
          <Poly data={BIG_ORDER} fx={mx} fy={(v) => v} color={YELLOW} />
        </IntradayPlot>
      </PlotRow>

      <PanelHeader right>
        <button type="button" className="flex items-center">分时力道<Caret /></button>
        <Readout text="64.384" color="text-[#ffff3c]" dir="down" last />
      </PanelHeader>
      <PlotRow right>
        <Axis top={1059} height={103} from={1108} step={10} labels={[["500", 1067, null, 1060], ["0", 1108], ["-500", 1156]]} />
        <IntradayPlot top={1059} height={103} rows={[1060, 1156]}>
          {minutes.map((m) => {
            const v = Math.round(interpolate(FORCE, m));
            return (
              <rect key={m} x={Math.round(mx(m) - 1)} y={v > 0 ? 1109 - v : 1109} width="3" height={Math.abs(v)} fill={v > 0 ? "#600018" : "#006018"} />
            );
          })}
          {FORCE_BARS.map(([m, up, upColor, down, downColor]) => (
            <g key={m}>
              <rect x={Math.round(mx(m) - 1)} y={1109 - up} width="3" height={up} fill={upColor} />
              <rect x={Math.round(mx(m) - 1)} y="1109" width="3" height={down} fill={downColor} />
            </g>
          ))}
          <Poly data={FORCE} fx={mx} fy={(v) => 1108.5 - v} color="#ffff00" />
        </IntradayPlot>
      </PlotRow>

      <PanelHeader right>
        <button type="button" className="flex items-center">多空能量<Caret /></button>
        <span className="flex">
          <Readout text="多头量能=0" color="text-[#ffff3c]" dir="down" />
          <Readout text="主动买盘总量=904" color="text-[#800030]" dir="down" last />
        </span>
      </PanelHeader>
      <PlotRow right>
        <Axis top={1183} height={99} from={1260} step={4} labels={[["5000", 1220], ["0", 1260]]} />
        <IntradayPlot top={1183} height={99} rows={[1220]}>
          {minutes.map((m) => {
            const h = ENERGY_SPIKES[m] || Math.round(1 + noise(m + 3) * 5);
            const g = Math.round(h * (m === 1 || m === -8 ? 0 : 0.2 + noise(m + 11) * 0.7));
            return (
              <g key={m}>
                <rect x={Math.round(mx(m))} y={1261 - h} width="2" height={h} fill="#3478a0" />
                <rect x={Math.round(mx(m))} y={1261 - g} width="2" height={g} fill="#2fa860" />
              </g>
            );
          })}
          <rect x={mx(229)} y="1261" width="2" height="21" fill="#3478a0" />
          <rect x={mx(187)} y="1261" width="2" height="4" fill="#3478a0" />
          <Poly
            data={minutes.filter((m) => m > -1).map((m) => [m, interpolate(ENERGY, m) * 1.1 + 1 + noise(m + 40) * 5])}
            fx={mx}
            fy={(v) => 1260 - v}
            color="#800030"
          />
          <Poly data={ENERGY} fx={mx} fy={(v) => 1260 - v} color="#ffff00" width={2} />
        </IntradayPlot>
      </PlotRow>

      <div className="flex h-[17px] text-xs leading-4 text-[#e8e8e8]">
        <button type="button" className="flex w-[63px] shrink-0 items-center gap-px border-r border-[#a80000] pl-0.5 text-[#b0b0b0]">
          分时
          <svg width="9" height="10" viewBox="0 0 9 10"><path d="M3 0h3v4h3L4.500 10L0 4h3z" fill="#fff" /></svg>
        </button>
        <div className="grid min-w-0 flex-1 grid-cols-[182fr_138fr_138fr_138fr_138fr_138fr_137fr_87fr_50fr_47fr]">
          <span className="pl-[3px]">4/29</span>
          {["10:00", "10:30", "11:00", "11:30", "13:30", "14:00", "14:30"].map((t) => (
            <span key={t} className="border-l border-[#a80000] pl-px">{t}</span>
          ))}
          <span className="border border-[#a80000] bg-[#263a60] text-center leading-[15px] text-[#ffff3c]">14:54</span>
          <span className="pl-0.5">15:00</span>
        </div>
      </div>
    </section>
  );
};

const DailyColumn = () => (
  <section className="flex min-w-0 flex-col border-x border-t border-[#a80000]">
    <PanelHeader tall frame={false}>
      <span className="text-[#b0b0b0]">海立股份</span>
      <button type="button" className="flex items-center pl-1">MA<Caret /></button>
      <span>
        (5,<span className="text-[#ffff3c]">10</span>,<span className="text-[#ff60ff]">20</span>,
        <span className="text-[#ff5c5c]">30</span>,<span className="text-[#00ffff]">60</span>,
        <span className="text-[#00ff66]">250</span>)
      </span>
      <span className="flex">
        <Readout text="MA1=5.918" color="text-white" dir="down" />
        <Readout text="MA2=6.223" color="text-[#ffff3c]" dir="down" />
        <Readout text="MA3=6.422" color="text-[#ff60ff]" dir="down" />
        <Readout text="MA4=6.499" color="text-[#ff5c5c]" dir="down" />
        <Readout text="MA5=6.732" color="text-[#00ffff]" dir="down" />
        <Readout text="MA6=8.079" color="text-[#00ff66]" dir="down" last />
      </span>
    </PanelHeader>
    <PlotRow>
      <Axis
        top={97}
        height={436}
        from={133.3}
        step={8.17}
        size={13}
        labels={[
          ["8.20", 105, RED, 102],
          ...["8.00", "7.80", "7.60", "7.40", "7.20", "7.00", "6.80", "6.60", "6.40", "6.20", "6.00", "5.80", "5.60"].map((t) => [
            t,
            Math.round(dayY(Number(t))),
            Number(t) > 5.76 ? RED : GREEN,
          ]),
        ]}
      />
      <DailyPlot top={97} height={436} rows={[102, 133, 166, 199, 231, 264, 297, 329, 362, 395, 427, 460, 492, 525]}>
        <path d="M1356 499.5H2143" stroke="#a80000" strokeDasharray="3 1" />
        {CANDLES.map(([high, top, bottom, low, kind], i) => {
          const x = Math.round(dx(i) - 5.5);
          const color = kind === "r" ? RED : CYAN;
          const h = Math.max(1, Math.round(dayY(bottom) - dayY(top)));
          const y = Math.round(dayY(top));
          return (
            <g key={i}>
              <path d={`M${x + 5.5} ${dayY(high)}V${dayY(low)}`} stroke={color} />
              {kind === "f" ? (
                <rect x={x} y={y} width="11" height={h} fill={CYAN} stroke={i === 36 ? RED : "none"} />
              ) : (
                <rect x={x + 0.5} y={y + 0.5} width="10" height={h} fill="#000" stroke={color} />
              )}
            </g>
          );
        })}
        {MA_LINES.map(([color, data]) => <Poly key={color} data={data} fx={dx} fy={dayY} color={color} />)}
        {[33, 34, 39, 40, 42, 44, 45].map((i) => <Diamond key={i} x={dx(i)} y={101.5} />)}
        <path d="M1364 266.500h20M2068 523.500h20" stroke="#c0c0c0" />
        <g fontSize="13" fill="#c0c0c0">
          <text x="1384" y="271">7.19</text>
          <text x="2088" y="528">5.61</text>
        </g>
        <path d={`M${dx(39)} 355l-4 -4h3v-3h2v3h3z`} fill={GREEN} />
        <path d={`M${dx(34)} 379l4 4h-3v4h-2v-4h-3z M${dx(45)} 502l4 4h-3v4h-2v-4h-3z`} fill="#ffff00" />
        <g fontFamily="'Liberation Serif', serif" fontWeight="700" fontSize="14" textAnchor="middle" strokeWidth="3" paintOrder="stroke">
          <text x={dx(39)} y="340" fill={GREEN} stroke="#305040">S</text>
          <text x={dx(34)} y="404" fill="#ffff40" stroke="#d00000">B</text>
          <text x={dx(45)} y="520" fill="#ffff40" stroke="#d00000">B</text>
        </g>
      </DailyPlot>
    </PlotRow>

    <PanelHeader>
      <button type="button" className="flex items-center">VOL<Caret /></button>
      <span>(<span className="text-[#ffff3c]">5</span>,<span className="text-[#ff60ff]">10</span>,<span className="text-[#ff5c5c]">20</span>)</span>
      <span className="flex">
        <Readout text="VOL=231555" color="text-white" dir="up" />
        <Readout text="MA1=110600" color="text-[#ffff3c]" dir="up" />
        <Readout text="MA2=93185" color="text-[#ff60ff]" dir="up" />
        <Readout text="MA3=75833" color="text-[#ff5c5c]" dir="up" last />
      </span>
    </PanelHeader>
    <PlotRow>
      <Axis top={554} height={106} from={567} step={4.67} unit="x100" labels={[["2000", 567], ["1000", 614]]} />
      <DailyPlot top={554} height={106} rows={[567, 614]}>
        <DayBars data={DAY_VOLUMES} base={659} />
        {VOL_MA.map(([color, data]) => <Poly key={color} data={data} fx={dx} fy={(v) => 659 - v} color={color} />)}
      </DailyPlot>
    </PlotRow>

    <PanelHeader>
      <button type="button" className="flex items-center">大单比率<Caret /></button>
      <span className="text-[#a0a0a0]">(5,30)</span>
      <span className="flex">
        <Readout text="大单比率=0.82" color="text-white" dir="up" />
        <Readout text="均值1=0.261" color="text-[#ffff3c]" dir="up" />
        <Readout text="均值2=0.026" color="text-[#ff60ff]" dir="up" last />
      </span>
    </PanelHeader>
    <PlotRow>
      <Axis top={681} height={105} from={759} step={4.8} labels={[["0.5", 711], ["0.0", 759]]} />
      <DailyPlot top={681} height={105} rows={[711, 759]}>
        <defs>
          <linearGradient id="ratioUp">
            <stop offset="0" stopColor="#ff7070" />
            <stop offset="0.5" stopColor="#fff" />
            <stop offset="1" stopColor="#ff7070" />
          </linearGradient>
          <linearGradient id="ratioDown">
            <stop offset="0" stopColor="#00ffff" />
            <stop offset="0.5" stopColor="#fff" />
            <stop offset="1" stopColor="#00ffff" />
          </linearGradient>
        </defs>
        {RATIOS.map((v, i) => (
          <rect
            key={i}
            x={Math.round(dx(i) - 5.5)}
            y={v > 0 ? 759 - v : 759}
            width="11"
            height={Math.abs(v)}
            fill={v > 0 ? "url(#ratioUp)" : "url(#ratioDown)"}
          />
        ))}
        {RATIO_MA.map(([color, data]) => <Poly key={color} data={data} fx={dx} fy={(v) => 759 - v} color={color} />)}
      </DailyPlot>
    </PlotRow>

    <PanelHeader>
      <button type="button" className="flex items-center">MACD<Caret /></button>
      <span className="text-[#a0a0a0]">(26,12,9)</span>
      <span className="flex">
        <Readout text="DIF=-0.205" color="text-white" dir="up" />
        <Readout text="DEA=-0.157" color="text-[#ffff3c]" dir="down" />
        <Readout text="MACD=-0.096" color="text-[#ff60ff]" dir="up" last />
      </span>
    </PanelHeader>
    <PlotRow>
      <Axis top={807} height={105} from={837} step={6.6} labels={[["0.0", 837], ["-0.1", 870], ["-0.2", 903]]} />
      <DailyPlot top={807} height={105} rows={[837, 870, 903]}>
        {DAY_HIST.map((v, i) => (
          <rect
            key={i}
            x={Math.round(dx(i))}
            y={v > 0 ? 837 - v : 838}
            width="1"
            height={Math.abs(v)}
            fill={v > 0 ? RED : GREEN}
          />
        ))}
        <Poly data={DAY_DIF} fx={dx} fy={(v) => 837.5 - v} color="#fff" />
        <Poly data={DAY_DEA} fx={dx} fy={(v) => 837.5 - v} color={YELLOW} />
      </DailyPlot>
    </PlotRow>

    <PanelHeader tall help={false}>
      <button type="button" className="flex items-center">量王叠现[VIP]<Caret /></button>
      <span className="flex">
        <Readout text="AMT=138742657" color="text-[#ff0000]" dir="up" />
        <Readout text="MA1=65539235.8" color="text-white" dir="up" />
        <Readout text="MA2=63144719.272" color="text-[#00ff00]" dir="up" last />
      </span>
    </PanelHeader>
    <PlotRow>
      <Axis top={934} height={104} from={961} step={7.6} unit="x1万" labels={[["10000", 961], ["5000", 999]]} />
      <DailyPlot top={934} height={104} rows={[961, 999]}>
        <DayBars data={DAY_AMOUNTS} base={1037} />
        <Poly data={AMOUNT_MA} fx={dx} fy={(v) => 1037 - v} color="#fff" />
        <Poly data={[[0, 44.5], [9, 44.5], [10, 45.5], [26, 46], [45, 47.5]]} fx={dx} fy={(v) => 1037 - v} color="#00d000" />
        <rect x="2095" y="934" width="13" height="104" fill="#ff00ff" />
      </DailyPlot>
    </PlotRow>

    <PanelHeader>
      <button type="button" className="-ml-0.5 flex h-[18px] items-center border border-[#ff9020] pl-px text-[#ff9020]">龙腾活跃[自编]<Caret /></button>
      <span className="flex">
        <Readout text="龙腾活跃=15.517" color="text-[#ffff3c]" dir="up" />
        <Readout text="海面线=20" color="text-[#00ffff]" last />
      </span>
    </PanelHeader>
    <PlotRow>
      <Axis
        top={1059}
        height={223}
        from={1114}
        step={11.3}
        labels={[["20", 1067, null, 1059], ["15", 1114], ["10", 1170], ["5", 1227], ["0", 1275, null, 1282]]}
      />
      <DailyPlot top={1059} height={223} rows={[1114, 1170, 1227]}>
        <path d="M1364 1060H2101" stroke={CYAN} strokeWidth="2" />
        <polyline
          points={ACTIVE.map((v, i) => `${dx(i)},${1283.500 - v * 11.27}`).join(" ")}
          fill="none"
          stroke="#ffff00"
          strokeWidth="2"
        />
      </DailyPlot>
    </PlotRow>

    <div className="flex h-[17px] text-xs leading-4 text-[#e8e8e8]">
      <button type="button" className="flex w-[63px] shrink-0 items-center gap-px border-r border-[#a80000] text-[#b0b0b0]">
        日线
        <svg width="9" height="10" viewBox="0 0 9 10"><path d="M3 0h3v4h3L4.500 10L0 4h3z" fill="#fff" /></svg>
      </button>
      <div className="grid min-w-0 flex-1 grid-cols-[8fr_65fr_377fr_337fr]">
        <span />
        {["2022/2", "3", "4"].map((t) => (
          <span key={t} className="border-l border-[#a80000] pl-px">{t}</span>
        ))}
      </div>
    </div>
  </section>
);

const BOARDS = [
  ["自选股"], ["全部A股"], ["港股通", 1], ["创业板"], ["科创板"], ["沪伦通GDR"], ["板块", 1], ["分类排名", 1], ["港股", 1], ["期货", 1],
  ["期权", 1], ["债券", 1], ["基金", 1], ["股转系统", 1], ["指数", 1], ["综合排名", 1],
];

const TopBar = () => (
  <header className="relative">
    <nav className="flex h-[7px] items-end overflow-hidden bg-gradient-to-b from-[#2c2c2c] to-[#3a3a3a] pl-[38px] text-xs leading-3 whitespace-nowrap text-white">
      {[
        ["预测", "w-12"], ["机构", "w-[45px]"], ["核心功能", "w-[70px]"], ["特色功能", "w-[70px]"], ["市场监测", "w-[69px]"],
        ["选股", "w-[42px]"], ["行情", "w-[50px]"], ["数据", "w-[46px]"], ["资讯", "w-[46px]"], ["策略中心", "w-[71px]"], ["设置", "w-12"],
      ].map(([t, w]) => (
        <a key={t} href="#" className={`${w} shrink-0 pb-1`}>
          <span className={t === "行情" ? "bg-[#a01010] px-1 pb-1" : "px-1"}>{t}</span>
        </a>
      ))}
    </nav>
    <div className="flex h-[33px] items-center border-t border-[#a03020] bg-gradient-to-b from-[#7c261c] to-[#4a1010] pl-11 text-xs whitespace-nowrap">
      <div className="flex gap-1">
        {BOARDS.map(([label, menu]) => (
          <button
            key={label}
            type="button"
            className="flex h-5 items-center rounded-[3px] border border-[#3a1408] bg-gradient-to-b from-[#ffb03c] to-[#c8801c] pl-[5px] text-[#2c1404]"
          >
            <span className="pr-[5px]">{label}</span>
            {menu && (
              <span className="flex h-3 w-[17px] items-center justify-center border-l border-[#a06a20] text-[#6a2c08]">
                <Caret />
              </span>
            )}
          </button>
        ))}
      </div>
      <div className="ml-auto flex w-[167px] shrink-0 items-center overflow-hidden text-white">
        <button type="button" className="h-[22px] w-[63px] shrink-0 rounded-[3px] border border-[#601010] bg-gradient-to-b from-[#d86058] to-[#b83838]">交 易</button>
        <button type="button" className="ml-2 h-[22px] w-[63px] shrink-0 rounded-[3px] border border-[#601010] bg-gradient-to-b from-[#d86058] to-[#b83838]">低佣开户</button>
        <a href="#" className="ml-2 shrink-0 border-l border-[#401010] pl-2">微操盘</a>
      </div>
    </div>
    <div className="pointer-events-none absolute top-0 left-1 flex items-center gap-2.5 leading-[46px] font-bold whitespace-nowrap text-[#b0a0a0] opacity-30">
      <span className="text-[47px]">选股无忧网</span>
      <span className="text-[52px]">WWW.XG51.CN</span>
    </div>
  </header>
);

const NavBar = () => (
  <nav className="flex h-[25px] items-center gap-3 border-t border-r border-l border-[#a80000] bg-[#161927] pl-[5px] text-xs whitespace-nowrap text-[#d8d8d8]">
    {["F10", "诊股", "机构", "识别", "四度"].map((t) => <a key={t} href="#">{t}</a>)}
    <a href="#" className="-mx-1 bg-[#f09820] px-1 leading-[22px] text-black">全景</a>
    <a href="#">个股三分钟</a>
    <a href="#">冲击波</a>
    <div className="-ml-1.5 flex h-[22px] items-center divide-x divide-[#303030] rounded-full bg-gradient-to-b from-[#3a3a3a] to-[#505050] px-1">
      {["分时", "日线", "60分", "30分"].map((t) => <button key={t} type="button" className="h-full px-1">{t}</button>)}
      <button type="button" className="flex h-full items-center gap-1 pr-1 pl-1">周线<Caret /></button>
    </div>
    <a href="#" className="ml-auto">返回个股分析</a>
    <a href="#">平移</a>
    <button type="button" className="-ml-1.5 flex h-[23px] w-[53px] items-center justify-center gap-1 bg-gradient-to-b from-[#383838] to-[#505050]">
      <span className="h-0.5 w-2 bg-[#d8d8d8]" />
      <span className="-ml-1">自选</span>
      <Caret />
    </button>
    <button type="button" aria-label="收起" className="-ml-1 pr-0.5">
      <svg width="12" height="12" viewBox="0 0 12 12"><path d="M1 1l5 5l-5 5M10 0v12" fill="none" stroke="#d0d0d0" strokeWidth="2" /></svg>
    </button>
  </nav>
);

const SIDE_TABS = ["股市全景", "分类报价", "个股分析", "个股全景"];

const SideTabs = () => (
  <aside className="flex w-[26px] shrink-0 flex-col pt-px pl-0.5">
    <div className="flex w-[18px] flex-1 flex-col border-r border-[#a80000]">
      {SIDE_TABS.map((t, i) => {
        const active = i === 3;
        return (
          <button key={t} type="button" className="block text-sm leading-4 text-[#d8d8d8]">
            <span
              className={`flex flex-col items-center border-t border-l border-[#a80000] ${i ? "h-[87px]" : "h-[88px] pt-[7px]"} ${
                active ? "bg-gradient-to-r from-[#400000] to-[#900000] text-white" : "bg-[#1c1c1e]"
              }`}
            >
              {i > 0 && (
                <svg width="8" height="8" viewBox="0 0 8 8" className="mt-1.5 mb-2 ml-1">
                  <path d="M1 0l6 8M7 0l-6 8" stroke="#909090" strokeWidth="2" />
                </svg>
              )}
              {[...t].map((c, k) => <span key={k} className="block">{c}</span>)}
            </span>
            <svg width="17" height="9" viewBox="0 0 17 9" className="block">
              <path d="M0 0h17v9z" fill={active ? "#600000" : "#1c1c1e"} />
              <path d="M0 0l17 9" stroke="#a80000" />
            </svg>
          </button>
        );
      })}
    </div>
  </aside>
);

const SELL = [["5", "6.28", "102"], ["4", "6.27", "288"], ["3", "6.26", "393"], ["2", "6.25", "831"], ["1", "6.24", "1417"]];
const BUY = [["1", "6.23", "827"], ["2", "6.22", "228"], ["3", "6.21", "500"], ["4", "6.20", "557"], ["5", "6.19", "9708"]];

const OrderBook = ({ title, rows }) => (
  <div className="flex h-[110px] border-b border-[#333]">
    <div className="flex w-[17px] shrink-0 flex-col border-r border-[#a80000] pt-[22px] leading-[22px]">
      <span className="h-11">{title}</span>
      <span>盘</span>
    </div>
    <table className="w-full table-fixed text-right text-[13px] leading-[22px]">
      <tbody>
        {rows.map(([n, price, size]) => (
          <tr key={n}>
            <th scope="row" className="w-10 pl-0.5 text-left text-sm leading-[21px] font-normal">{n}</th>
            <td className="w-[111px] text-[#ff5c5c]">{price}</td>
            <td className="w-[133px] text-[#ffff3c]">{size}</td>
            <td />
          </tr>
        ))}
      </tbody>
    </table>
  </div>
);

const STATS = [
  ["最新", "6.24", "text-[#ff5c5c]", "均价", "5.99", "text-[#ff5c5c]", ""],
  ["涨跌", "▲0.48", "text-[#ff5c5c]", "开盘", "5.80", "text-[#ff5c5c]", ""],
  ["涨幅", "+8.33%", "text-[#ff5c5c]", "最高", "6.25", "text-[#ff5c5c]", ""],
  ["总手", "23.16万", "text-[#00ffff]", "最低", "5.75", "text-[#00ff66]", ""],
  ["现手", "1484▼", "text-[#ffff3c]", "量比", "2.85", "text-[#ff5c5c]", ""],
  ["金额", "1.387亿", "text-[#ffff3c]", "强弱", "▲9.8%", "text-[#ff5c5c]", ""],
  ["换手", "3.25%", "text-[#ffff3c]", "5日", "7.75%", "text-[#ffff3c]", "border-b border-[#a80000]"],
  ["涨停", "6.34", "text-[#ff5c5c]", "跌停", "5.18", "text-[#00ff66]", "border-b border-[#500000]"],
  ["笔数", "23810", "text-[#00ffff]", "均笔", "9.73", "text-[#00ffff]", "border-b border-[#a80000]"],
  ["内盘", "107436", "text-[#00ff66]", "外盘", "124119", "text-[#ff5c5c]", "border-b border-[#500000]"],
];

const DEALS = [
  {
    chars: "委买单", count: "13076", avg: "17.7",
    rows: [["特大", "32879", "14%", "bg-[#ff6060]"], ["大单", "81136", "35%", "bg-[#aa4040]"], ["中单", "55055", "24%", "bg-[#803030]"], ["小单", "62484", "27%", "bg-[#552020]"]],
  },
  {
    chars: "委卖单", count: "12312", avg: "18.8",
    rows: [["特大", "19000", "8%", "bg-[#00ffff]"], ["大单", "36638", "16%", "bg-[#00aaaa]"], ["中单", "99300", "43%", "bg-[#008080]"], ["小单", "76617", "33%", "bg-[#005555]"]],
  },
];

const PIE = [
  [7, "#ff6060"], [18, "#aa4040"], [12, "#803030"], [13, "#552020"], [17, "#005555"], [21, "#008080"], [8, "#00aaaa"], [4, "#00ffff"],
];

const PieChart = () => {
  let angle = 0;
  const point = (a) => `${(63 + 62 * Math.sin(a)).toFixed(2)} ${(63 - 62 * Math.cos(a)).toFixed(2)}`;
  return (
    <svg width="126" height="126" viewBox="0 0 126 126">
      {PIE.map(([share, color]) => {
        const start = angle;
        angle += (share / 100) * Math.PI * 2;
        return <path key={color} d={`M63 63L${point(start)}A62 62 0 0 1 ${point(angle)}Z`} fill={color} stroke="#a00000" />;
      })}
    </svg>
  );
};

const FINANCE = [
  ["市盈率(TTM)", "20.741", "text-[#ff5c5c]"],
  ["扣非市盈率(TTM)", "-296.251", "text-[#00ff66]"],
  ["市净率", "1.0823", "text-[#ff5c5c]"],
  ["有效流通市值", "25.6亿", "text-[#ffff3c]"],
  ["流通A市值", "44.44亿", "text-[#ffff3c]"],
  ["总市值", "67.67亿", "text-[#ffff3c]"],
];

const Sidebar = () => (
  <aside className="w-[350px] shrink-0 overflow-hidden text-sm text-[#c0c0c0]">
    <div className="w-[376px] whitespace-nowrap">
      <section className="border-t border-l border-b border-[#a80000]">
        <div className="flex h-[33px] items-center border-b border-[#a80000]">
          <button type="button" aria-label="上一只"><ChevronLeft size={17} strokeWidth={3} color="#888" /></button>
          <h1 className="flex flex-1 items-center justify-center gap-2 pr-5 text-xl">
            海立股份 <span className="text-lg text-[#00ffff]">600619</span>
          </h1>
        </div>
        <div className="flex h-[22px] items-center border-b border-[#a80000] pl-1">
          <span className="w-[88px]">委比</span>
          <span className="w-[92px] text-right text-[13px] text-[#ff5c5c]">+74.59%</span>
          <span className="flex-1 pr-0.5 text-right text-[13px] text-[#ff5c5c]">53281</span>
        </div>
        <OrderBook title="卖" rows={SELL} />
        <OrderBook title="买" rows={BUY} />
        <table className="w-full table-fixed text-right text-[13px] leading-[21px]">
          <tbody>
            {STATS.map(([a, av, ac, b, bv, bc, line]) => (
              <tr key={a} className={`h-[22px] ${line}`}>
                <th scope="row" className="w-[60px] pl-1 text-left text-sm leading-[21px] font-normal">{a}</th>
                <td className={`w-[125px] ${ac}`}>
                  {av.endsWith("▼") ? <>{av.slice(0, -1)}<span className="text-[10px] text-[#00ff66]">▼</span></> : av}
                </td>
                <th scope="row" className="w-[60px] pl-2 text-left text-sm leading-[21px] font-normal">{b}</th>
                <td className={bc}>{bv}</td>
              </tr>
            ))}
          </tbody>
        </table>
        <h2 className="h-[22px] bg-gradient-to-b from-[#2c2c2c] to-[#1a1a1a] pr-5 text-center text-[13px] leading-[21px] text-white">龙虎看盘(逐单量)</h2>
        <div className="flex h-[156px] items-center justify-center"><PieChart /></div>
        <div className="h-[22px] border-b border-[#700000] pl-0.5 leading-[21px]">已成交委托单统计</div>
        {DEALS.map((deal) => (
          <div key={deal.chars} className="flex h-[110px] border-b border-[#a80000] leading-[22px]">
            <div className="flex w-[21px] shrink-0 flex-col items-center border-r border-[#a80000] pt-[22px]">
              {[...deal.chars].map((c) => <span key={c}>{c}</span>)}
            </div>
            <div>
              <div className="h-[22px] pl-0.5 leading-[21px]">
                共<span className="text-[13px] text-[#00ffff]">{deal.count}</span>单<span className="text-[13px] text-[#ffff3c]">{deal.avg}</span>手/单
              </div>
              <table className="table-fixed text-right text-[13px] text-[#ffff3c]">
                <tbody>
                  {deal.rows.map(([name, count, share, swatch]) => (
                    <tr key={name} className="h-[22px] leading-[21px]">
                      <th scope="row" className="w-[68px] text-left text-sm leading-[21px] font-normal text-[#c0c0c0]">
                        <span className="flex items-center gap-1 pl-[3px]"><span className={`size-3.5 ${swatch}`} />{name}</span>
                      </th>
                      <td className="w-[74px]">{count}</td>
                      <td className="w-[85px]">{share}</td>
                    </tr>
                  ))}
                </tbody>
              </table>
            </div>
          </div>
        ))}
        <nav className="flex h-[23px] items-center gap-3 bg-[#161927] pl-[5px] text-xs leading-[23px] text-[#d8d8d8]">
          {["分笔", "短线", "分时", "资金", "财务"].map((t) => <a key={t} href="#">{t}</a>)}
          <a href="#" className="-ml-1.5 bg-[#f09820] px-[5px] text-black">龙虎</a>
        </nav>
      </section>

      <section className="mt-[7px] border-t border-l border-[#a80000]">
        <div className="flex h-6 border-b border-[#a80000] bg-[#161927]">
          <button type="button" className="bg-[#f09820] px-[5px] text-xs text-black">财务</button>
        </div>
        <div className="grid h-[26px] grid-cols-2 text-xs text-white">
          <button type="button" className="border-r border-[#a80000] bg-gradient-to-b from-[#900000] to-[#480000]">财务分析</button>
          <button type="button" className="bg-gradient-to-b from-[#262628] to-[#1a1a1c] text-[#c8c8c8]">深度分析</button>
        </div>
        <dl className="leading-[26px]">
          <div className="flex justify-between pr-2 pl-px"><dt>所属行业</dt><dd className="text-[#ffff3c]">家电</dd></div>
          <div className="flex gap-2 pl-px"><dt>所属概念</dt><dd className="text-[#ffff3c]">低市净率,地热能,股权激励,破净股,上海国资整合</dd></div>
        </dl>
        <h2 className="bg-gradient-to-b from-[#303030] to-[#1c1c1c] pr-2 text-center leading-[26px]">主要指标</h2>
        <dl className="leading-[26px]">
          <div className="flex justify-between pr-[26px] pl-px"><dt>财报披露</dt><dd>2022-04-29</dd></div>
          {FINANCE.map(([name, value, color]) => (
            <div key={name} className="flex justify-between pr-2 pl-px">
              <dt>{name}</dt>
              <dd className={`text-[13px] ${color}`}>{value}</dd>
            </div>
          ))}
        </dl>
      </section>
    </div>
  </aside>
);

const App = () => {
  return (
    <div className="flex h-screen flex-col overflow-hidden border-l-2 border-white bg-black font-['Liberation_Sans','Noto_Sans_CJK_SC',sans-serif]">
      <TopBar />
      <div className="flex min-h-0 flex-1">
        <SideTabs />
        <div className="flex min-h-0 min-w-0 flex-1 gap-1.5 pt-1.5">
          <main className="min-w-0 flex-1">
            <NavBar />
            <div className="mt-1 grid grid-cols-[1258fr_852fr] gap-1.5">
              <IntradayColumn />
              <DailyColumn />
            </div>
          </main>
          <Sidebar />
        </div>
      </div>
    </div>
  );
};

export default App;
